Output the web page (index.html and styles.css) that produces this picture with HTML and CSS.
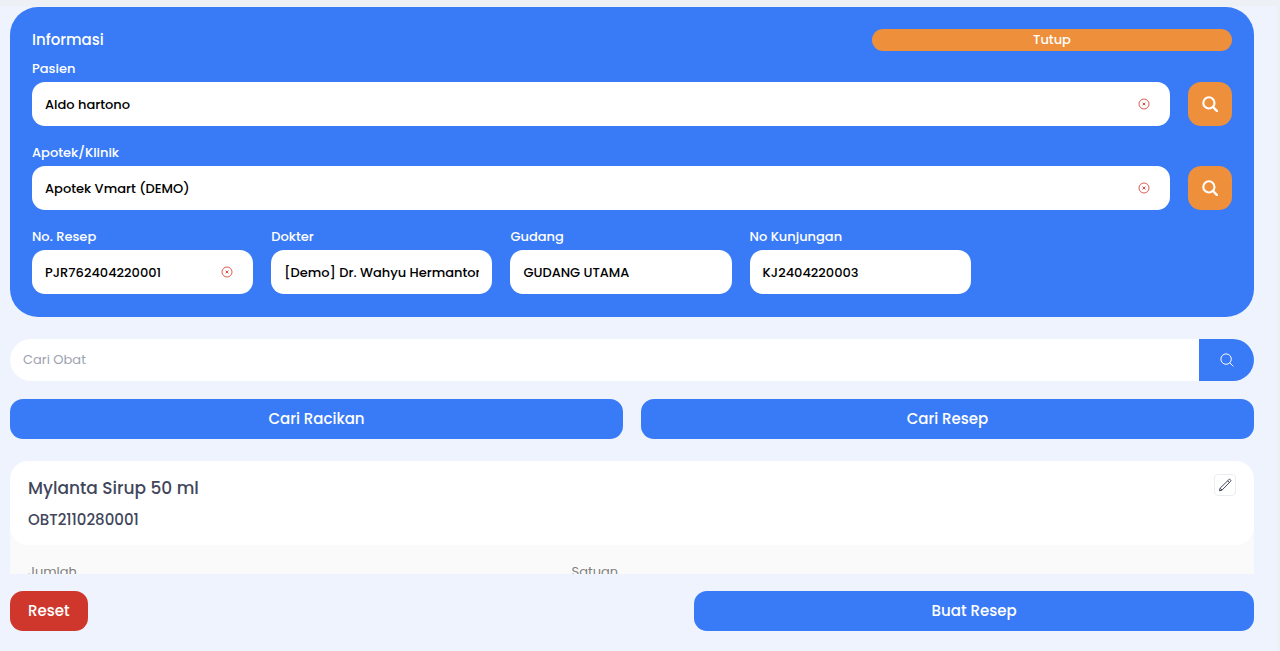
FILE: index.html
```html
<!DOCTYPE html>
<html lang="id">
<head>
<meta charset="utf-8">
<meta name="viewport" content="width=device-width, initial-scale=1">
<title>Resep</title>
<link rel="stylesheet" href="styles.css">
</head>
<body>
<svg class="sprite" aria-hidden="true">
  <symbol id="icon-clear" viewBox="0 0 12 12">
    <circle cx="6" cy="6" r="5" fill="none" stroke="currentColor" stroke-width="0.9"/>
    <path d="M4.6 4.6l2.8 2.8M7.4 4.6l-2.8 2.8" fill="none" stroke="currentColor" stroke-width="1"/>
  </symbol>
  <symbol id="icon-search-bold" viewBox="0 0 16 16">
    <circle cx="6.9" cy="6.9" r="5.6" fill="none" stroke="currentColor" stroke-width="2.1"/>
    <path d="M11 11l3.8 3.8" fill="none" stroke="currentColor" stroke-width="2.4" stroke-linecap="round"/>
  </symbol>
  <symbol id="icon-search" viewBox="0 0 14 14">
    <circle cx="6.1" cy="6.1" r="5.2" fill="none" stroke="currentColor" stroke-width="1"/>
    <path d="M9.8 9.8l3.3 3.3" fill="none" stroke="currentColor" stroke-width="1" stroke-linecap="round"/>
  </symbol>
  <symbol id="icon-pencil" viewBox="0 0 14 14">
    <path d="M1.4 12.8l.7-2.6L10.9 1.6a1 1 0 0 1 1.4 0l.3.3a1 1 0 0 1 0 1.4L4 12.1z M9.7 2.8l1.7 1.7M2.1 10.2L4 12.1" fill="none" stroke="currentColor" stroke-width="1" stroke-linejoin="round"/>
  </symbol>
</svg>
<main class="page">
  <div class="scroll">
    <section class="info">
      <header class="info-head">
        <h1 class="info-title">Informasi</h1>
        <button class="close" type="button">Tutup</button>
      </header>
      <div class="group">
        <label class="label" for="pasien">Pasien</label>
        <div class="lookup">
          <div class="field">
            <input class="input" id="pasien" type="text" value="Aldo hartono">
            <button class="clear" type="button" aria-label="Hapus pasien"><svg class="icon-12"><use href="#icon-clear"/></svg></button>
          </div>
          <button class="find" type="button" aria-label="Cari pasien"><svg class="icon-16"><use href="#icon-search-bold"/></svg></button>
        </div>
      </div>
      <div class="group">
        <label class="label" for="apotek">Apotek/Klinik</label>
        <div class="lookup">
          <div class="field">
            <input class="input" id="apotek" type="text" value="Apotek Vmart (DEMO)">
            <button class="clear" type="button" aria-label="Hapus apotek"><svg class="icon-12"><use href="#icon-clear"/></svg></button>
          </div>
          <button class="find" type="button" aria-label="Cari apotek"><svg class="icon-16"><use href="#icon-search-bold"/></svg></button>
        </div>
      </div>
      <div class="details">
        <div class="group">
          <label class="label" for="resep">No. Resep</label>
          <div class="field">
            <input class="input" id="resep" type="text" value="PJR762404220001">
            <button class="clear" type="button" aria-label="Hapus nomor resep"><svg class="icon-12"><use href="#icon-clear"/></svg></button>
          </div>
        </div>
        <div class="group">
          <label class="label" for="dokter">Dokter</label>
          <div class="field"><input class="input" id="dokter" type="text" value="[Demo] Dr. Wahyu Hermantono"></div>
        </div>
        <div class="group">
          <label class="label" for="gudang">Gudang</label>
          <div class="field"><input class="input" id="gudang" type="text" value="GUDANG UTAMA"></div>
        </div>
        <div class="group">
          <label class="label" for="kunjungan">No Kunjungan</label>
          <div class="field"><input class="input" id="kunjungan" type="text" value="KJ2404220003"></div>
        </div>
      </div>
    </section>

    <form class="search">
      <input class="search-input" type="text" placeholder="Cari Obat" aria-label="Cari Obat">
      <button class="search-button" type="button" aria-label="Cari"><svg class="icon-14"><use href="#icon-search"/></svg></button>
    </form>

    <div class="actions">
      <button class="button" type="button">Cari Racikan</button>
      <button class="button" type="button">Cari Resep</button>
    </div>

    <article class="card">
      <div class="card-head">
        <div>
          <h2 class="drug">Mylanta Sirup 50 ml</h2>
          <p class="code">OBT2110280001</p>
        </div>
        <button class="edit" type="button" aria-label="Ubah"><svg class="icon-14"><use href="#icon-pencil"/></svg></button>
      </div>
      <div class="card-body">
        <span>Jumlah</span>
        <span>Satuan</span>
      </div>
    </article>
  </div>
  <footer class="footer">
    <button class="button reset" type="button">Reset</button>
    <button class="button submit" type="button">Buat Resep</button>
  </footer>
</main>
</body>
</html>
```
FILE: styles.css
```css
* {
  box-sizing: border-box;
}

body {
  margin: 0;
  background: #eef3fe;
  font-family: "Poppins", "Inter", "Liberation Sans", sans-serif;
  font-size: 13px;
  font-weight: 500;
  color: #000;
}

button,
input {
  margin: 0;
  border: 0;
  padding: 0;
  font: inherit;
  color: inherit;
}

h1,
h2,
p {
  margin: 0;
  font-weight: inherit;
}

svg {
  display: block;
}

.sprite {
  position: absolute;
  width: 0;
  height: 0;
}

.icon-12 {
  width: 12px;
  height: 12px;
}

.icon-14 {
  width: 14px;
  height: 14px;
}

.icon-16 {
  width: 16px;
  height: 16px;
}

.page {
  display: flex;
  flex-direction: column;
  height: 100vh;
  border-top: 6px solid #edf0f4;
  border-right: 3px solid #edf0f4;
  padding: 1px 23px 20px 10px;
}

.scroll {
  flex: 1;
  min-height: 0;
  overflow: hidden;
}

.info {
  display: flex;
  flex-direction: column;
  gap: 16px;
  padding: 22px 22px 23px;
  border-radius: 28px;
  background: #397bf7;
  color: #fff;
}

.info-head {
  display: flex;
  align-items: center;
  justify-content: space-between;
  margin-bottom: -9px;
}

.info-title {
  font-size: 15px;
  line-height: 22px;
}

.close {
  width: 30%;
  height: 22px;
  border-radius: 11px;
  background: #ee8f3b;
  line-height: 22px;
}

.group {
  display: flex;
  flex-direction: column;
  gap: 2px;
  min-width: 0;
}

.label {
  line-height: 22px;
}

.lookup {
  display: flex;
  gap: 18px;
}

.field {
  display: flex;
  flex: 1;
  align-items: center;
  min-width: 0;
  padding: 0 13px;
  border-radius: 13px;
  background: #fff;
}

.input {
  flex: 1;
  min-width: 0;
  width: 100%;
  height: 44px;
  padding-top: 2px;
  background: transparent;
  color: #000;
  outline: none;
}

.clear {
  padding: 0 7px;
  background: transparent;
  color: #d9483f;
}

.find {
  display: grid;
  place-items: center;
  width: 44px;
  height: 44px;
  border-radius: 13px;
  background: #ee8f3b;
}

.details {
  display: grid;
  grid-template-columns: repeat(5, 1fr);
  gap: 18px;
  margin-right: 22px;
}

.search {
  display: flex;
  height: 42px;
  margin-top: 22px;
  overflow: hidden;
  border-radius: 21px;
  background: #fff;
}

.search-input {
  flex: 1;
  padding: 0 13px;
  background: transparent;
  font-weight: 400;
  outline: none;
}

.search-input::placeholder {
  color: #9ca3af;
}

.search-button {
  display: grid;
  place-items: center;
  width: 55px;
  background: #397bf7;
  color: #fff;
}

.actions {
  display: grid;
  grid-template-columns: 1fr 1fr;
  gap: 18px;
  margin-top: 18px;
}

.button {
  height: 40px;
  padding-bottom: 2px;
  border-radius: 13px;
  background: #397bf7;
  color: #fff;
  font-size: 15px;
}

.card {
  margin-top: 22px;
  border-radius: 22px;
  background: #fafafa;
}

.card-head {
  display: flex;
  align-items: flex-start;
  justify-content: space-between;
  padding: 13px 18px 14px;
  border-radius: 18px;
  background: #fff;
  color: #41465a;
}

.drug {
  font-size: 17px;
  line-height: 28px;
}

.code {
  margin-top: 7px;
  font-size: 15px;
  line-height: 22px;
}

.edit {
  display: grid;
  place-items: center;
  width: 22px;
  height: 22px;
  border: 1px solid #ecedf0;
  border-radius: 4px;
  background: #fff;
}

.card-body {
  display: grid;
  grid-template-columns: 45% 1fr;
  padding: 17px 18px;
  color: #808080;
  font-weight: 400;
  line-height: 20px;
}

.footer {
  display: flex;
  justify-content: space-between;
  padding-top: 17px;
}

.reset {
  padding: 0 18px 2px;
  background: #cf372c;
}

.submit {
  width: 45%;
}
```
